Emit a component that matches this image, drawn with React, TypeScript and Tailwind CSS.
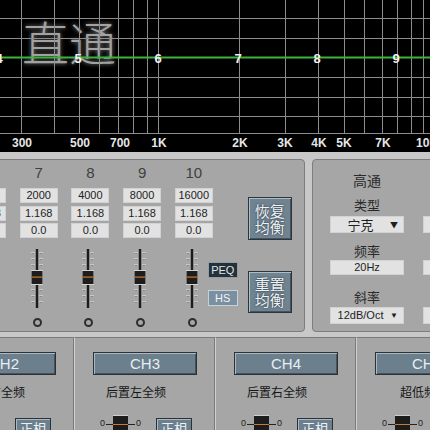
import React from "react";

// frequency grid of the response graph
const GRID_X = [21, 54, 79, 99, 118, 133, 147, 158, 239, 285, 318, 344, 364, 382, 397, 411, 423];
const GRID_Y = [-1, 18, 38, 77, 97, 116, 133];

const FREQ_LABELS: [number, string][] = [
  [22, "300"],
  [80, "500"],
  [120, "700"],
  [159, "1K"],
  [240, "2K"],
  [285, "3K"],
  [319, "4K"],
  [344, "5K"],
  [383, "7K"],
  [427, "10K"],
];

const BAND_MARKS: [number, string][] = [
  [-1, "4"],
  [78, "5"],
  [158, "6"],
  [238, "7"],
  [317, "8"],
  [396, "9"],
];

const EQ_BANDS = [
  { n: "6", f: "1000" },
  { n: "7", f: "2000" },
  { n: "8", f: "4000" },
  { n: "9", f: "8000" },
  { n: "10", f: "16000" },
];

const CHANNELS = [
  { id: "CH2", label: "前置右全频" },
  { id: "CH3", label: "后置左全频" },
  { id: "CH4", label: "后置右全频" },
  { id: "CH5", label: "超低频" },
];

function Graph() {
  return (
    <div className="relative h-[152px] bg-black">
      <div className="absolute left-[22px] top-[17px] font-['Noto_Sans_CJK_SC',sans-serif] text-[47px] font-light leading-none text-[#a2a2a2] [text-shadow:0_0_4px_rgba(255,255,255,0.5)]">
        直通
      </div>
      <svg width="430" height="152" className="relative block">
        {GRID_Y.map((y) => (
          <line key={y} x1={0} x2={430} y1={y + 0.5} y2={y + 0.5} stroke="#8c8c8c" strokeWidth={1} />
        ))}
        {GRID_X.map((x) => (
          <line key={x} x1={x + 0.5} x2={x + 0.5} y1={0} y2={133} stroke="#8c8c8c" strokeWidth={1} />
        ))}
        <line x1={0} x2={430} y1={57.5} y2={57.5} stroke="#3cb43c" strokeWidth={2} />
        {BAND_MARKS.map(([x, t]) => (
          <text
            key={t}
            x={x}
            y={63}
            textAnchor="middle"
            fill="#f2f2f2"
            fontSize={13}
            fontWeight={700}
            fontFamily="'Liberation Sans', sans-serif"
          >
            {t}
          </text>
        ))}
        {FREQ_LABELS.map(([x, t]) => (
          <text
            key={t}
            x={x}
            y={147}
            textAnchor="middle"
            fill="#e6e6e6"
            fontSize={12}
            fontWeight={700}
            fontFamily="'Liberation Sans', sans-serif"
          >
            {t}
          </text>
        ))}
      </svg>
    </div>
  );
}

function ValueBox({ children }: { children?: React.ReactNode }) {
  return (
    <div className="flex h-[15px] w-[38px] items-center justify-center bg-[#e2e2e2] text-[11px] leading-none text-[#222] shadow-[inset_0_0_0_1px_#d2d2d2]">
      {children}
    </div>
  );
}

function Fader() {
  const ticks = [3, 9, 15, 40, 46, 52];
  return (
    <svg width="20" height="59" className="mr-[4px] block">
      {ticks.map((y) => (
        <g key={y}>
          <line x1={4} x2={8} y1={y + 0.5} y2={y + 0.5} stroke="#c9c9c9" />
          <line x1={12} x2={16} y1={y + 0.5} y2={y + 0.5} stroke="#c9c9c9" />
          <line x1={5} x2={7} y1={y + 1.5} y2={y + 1.5} stroke="#8a8a8a" />
          <line x1={13} x2={15} y1={y + 1.5} y2={y + 1.5} stroke="#8a8a8a" />
        </g>
      ))}
      <rect x={8.8} y={0} width={2.4} height={59} fill="#1c1c1c" />
      <rect x={4} y={21} width={12} height={15} fill="#d4d4d4" />
      <rect x={4.5} y={22} width={11} height={13} fill="#1d1d1d" />
      <rect x={4.5} y={27.5} width={11} height={1.2} fill="#c97a2f" />
    </svg>
  );
}

function EqColumn({ n, f }: { n: string; f: string }) {
  return (
    <div className="flex w-[38px] flex-col items-center pt-[4px]">
      <div className="h-[18px] text-[15px] leading-[18px] text-[#404040]">{n}</div>
      <div className="mt-[6px] flex flex-col gap-[2.5px]">
        <ValueBox>{f}</ValueBox>
        <ValueBox>1.168</ValueBox>
        <ValueBox>0.0</ValueBox>
      </div>
      <div className="mt-[11px]">
        <Fader />
      </div>
      <div className="mr-[3px] mt-[9.5px] h-[9px] w-[9px] rounded-full border-2 border-[#2e2e2e]" />
    </div>
  );
}

function BigButton({ top, bottom, h }: { top: string; bottom: string; h: string }) {
  return (
    <div
      className={`flex w-[44px] flex-col items-center justify-center border border-[#2c353b] bg-[#6f8391] font-['Noto_Sans_CJK_SC',sans-serif] text-[15px] leading-[16px] text-[#eef2f5] shadow-[inset_1px_1px_0_#aebdc7,inset_-1px_-1px_0_#46535c] [text-shadow:0_0_2px_#1e272d] ${h}`}
    >
      <span>{top}</span>
      <span>{bottom}</span>
    </div>
  );
}

function SelectBox({ children, small }: { children: React.ReactNode; small?: boolean }) {
  return (
    <div className="flex h-[17px] w-[74px] items-center bg-[#e2e2e2] pl-[4px] pr-[6px] shadow-[inset_0_0_0_1px_#d2d2d2]">
      <span className={`flex-1 text-center leading-none text-[#1e1e1e] ${small ? "text-[11px]" : "text-[13px]"}`}>
        {children}
      </span>
      <span className="ml-[3px] text-[8px] leading-none text-[#1e1e1e]">▼</span>
    </div>
  );
}

function FilterColumn({ title, type, freq, slope }: { title: string; type: string; freq: string; slope: string }) {
  return (
    <div className="flex w-[74px] shrink-0 flex-col items-center pt-[10px] font-['Noto_Sans_CJK_SC',sans-serif] text-[#2a2a2a]">
      <div className="text-[14px] leading-[20px]">{title}</div>
      <div className="mt-[6.5px] text-[13px] leading-[16px]">类型</div>
      <div className="mt-[3.5px]">
        <SelectBox>{type}</SelectBox>
      </div>
      <div className="mt-[10px] text-[13px] leading-[16px]">频率</div>
      <div className="mt-[1px] flex h-[15px] w-[74px] items-center justify-center bg-[#e2e2e2] font-['Liberation_Sans',sans-serif] text-[11px] leading-none text-[#1e1e1e] shadow-[inset_0_0_0_1px_#d2d2d2]">
        {freq}
      </div>
      <div className="mt-[13.5px] text-[13px] leading-[16px]">斜率</div>
      <div className="mt-[2.5px] font-['Liberation_Sans',sans-serif]">
        <SelectBox small>{slope}</SelectBox>
      </div>
    </div>
  );
}

function ChannelPanel({ id, label }: { id: string; label: string }) {
  return (
    <div className="h-[93px] w-[141px] shrink-0 border-l border-r border-t border-l-[#d0d0d0] border-r-[#7a7a7a] border-t-[#7a7a7a] bg-[#a6a6a6] pl-[18px]">
      <div className="mt-[14px] flex h-[23px] w-[104px] items-center justify-center border border-[#2a3238] bg-[#6b7f8d] text-[15px] leading-none text-[#e8eef2] shadow-[inset_1px_1px_0_#a9b8c2,inset_-1px_-1px_0_#46535c]">
        {id}
      </div>
      <div className="mt-[9px] w-[104px] pr-[18px] text-center font-['Noto_Sans_CJK_SC',sans-serif] text-[12px] leading-[16px] text-[#161616]">
        {label}
      </div>
      <div className="mt-[15px] flex items-start">
        <span className="ml-[7px] mt-[4px] text-[9px] leading-none text-[#222]">0</span>
        <div className="relative ml-[1px] h-[15px] w-[29px]">
          <div className="absolute left-0 right-0 top-[8.5px] h-[1px] bg-[#222]" />
          <div className="absolute left-[7px] top-0 h-[15px] w-[15px] border-t border-[#d0d0d0] bg-[#1d1d1d]">
            <div className="mt-[8px] h-[1px] bg-[#c97a2f]" />
          </div>
        </div>
        <span className="ml-[1px] mt-[4px] text-[9px] leading-none text-[#222]">0</span>
        <div className="ml-[15px] mt-[3px] flex h-[18px] w-[36px] items-start justify-center border border-[#2a3238] bg-[#6b7f8d] pt-[1px] font-['Noto_Sans_CJK_SC',sans-serif] text-[13px] leading-[16px] text-[#eef2f5] shadow-[inset_1px_1px_0_#a9b8c2]">
          正相
        </div>
      </div>
    </div>
  );
}

export default function App() {
  return (
    <div className="relative h-[430px] w-[430px] overflow-hidden bg-[#c8c8c8] font-['Liberation_Sans',sans-serif]">
      <Graph />

      {/* EQ + crossover */}
      <div className="flex h-[185px] items-start pt-[7px]">
        <div className="ml-[-40px] flex h-[173px] w-[345px] shrink-0 rounded-[4px] border border-[#7d7d7d] bg-[#a6a6a6] pl-[7px]">
          <div className="flex gap-[13.7px]">
            {EQ_BANDS.map((b) => (
              <EqColumn key={b.n} n={b.n} f={b.f} />
            ))}
          </div>
          <div className="ml-[-5px] flex w-[30px] flex-col pt-[102px]">
            <div className="flex h-[16px] items-center justify-center border border-[#8f9ea8] bg-[#253039] text-[11px] leading-none text-[#dfe6ec]">
              PEQ
            </div>
            <div className="mt-[12px] flex h-[16px] items-center justify-center border border-[#c6d2da] bg-[#7a8fa0] text-[11px] leading-none text-[#f0f4f8]">
              HS
            </div>
          </div>
          <div className="ml-[10px] flex flex-col pt-[37px]">
            <BigButton top="恢复" bottom="均衡" h="h-[43px]" />
            <div className="mt-[31px]">
              <BigButton top="重置" bottom="均衡" h="h-[42px]" />
            </div>
          </div>
        </div>

        <div className="ml-[7px] flex h-[173px] w-[200px] shrink-0 gap-[19px] rounded-[4px] border border-[#7d7d7d] bg-[#a6a6a6] pl-[17px]">
          <FilterColumn title="高通" type="宁克" freq="20Hz" slope="12dB/Oct" />
          <FilterColumn title="低通" type="宁克" freq="20kHz" slope="12dB/Oct" />
        </div>
      </div>

      {/* channels */}
      <div className="ml-[-67px] flex">
        {CHANNELS.map((c) => (
          <ChannelPanel key={c.id} id={c.id} label={c.label} />
        ))}
      </div>
    </div>
  );
}
